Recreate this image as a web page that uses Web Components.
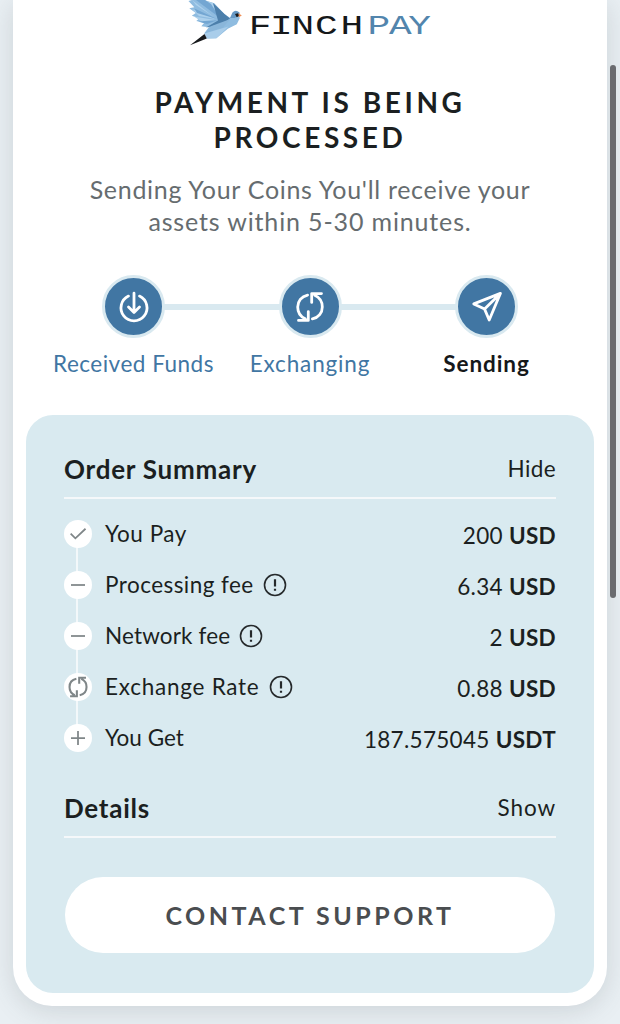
<!DOCTYPE html>
<html lang="en">
<head>
<meta charset="UTF-8">
<meta name="viewport" content="width=device-width, initial-scale=1.0">
<title>FinchPay</title>
<style>
    :root {
        --color-primary: #4176a3;
        --color-panel: #d9eaf0;
        --color-text: #1b1f21;
    }

    body {
        margin: 0;
        height: 1024px;
        overflow: hidden;
        background: #e8eef3;
        color: var(--color-text);
        font-family: Lato, "Liberation Sans", sans-serif;
    }
</style>
</head>
<body>
<payment-page>
    <finch-logo></finch-logo>
    <status-heading>
        <span slot="title">PAYMENT IS BEING<br>PROCESSED</span>
        <span slot="first">Sending Your Coins You'll receive your</span>
        <span slot="second">assets within 5-30 minutes.</span>
    </status-heading>
    <progress-steps>
        <progress-step icon="receive" style="--label-spacing: 0.5px">Received Funds</progress-step>
        <progress-step icon="exchange" style="--label-spacing: 0.85px">Exchanging</progress-step>
        <progress-step icon="send" current style="--label-spacing: 0.9px">Sending</progress-step>
    </progress-steps>
    <order-panel>
        <section-header action="Hide">Order Summary</section-header>
        <order-rows>
            <order-row icon="check" amount="200" currency="USD" style="--label-spacing: 0.5px">You Pay</order-row>
            <order-row icon="minus" amount="6.34" currency="USD" info style="--label-spacing: 0.45px">Processing fee</order-row>
            <order-row icon="minus" amount="2" currency="USD" info style="--label-spacing: 0.15px">Network fee</order-row>
            <order-row icon="exchange" amount="0.88" currency="USD" info style="--label-spacing: 0.75px">Exchange Rate</order-row>
            <order-row icon="plus" amount="187.575045" currency="USDT" style="--label-spacing: 0px">You Get</order-row>
        </order-rows>
        <section-header action="Show" style="--action-spacing: 0.9px">Details</section-header>
        <support-button>CONTACT SUPPORT</support-button>
    </order-panel>
</payment-page>

<script>
const ICONS = {
    receive: '<path d="M10.5 5.1a13 13 0 1 0 11 0M16 2.2v19M10.5 16l5.5 5.4 5.5-5.4"/>',
    exchange: '<path d="M13.6 4.1C7.4 5.4 3.7 10.3 3.7 16c0 5.3 2.6 9.6 7.6 11.8M4.5 29.4h9.8v-8.8M18.4 27.9c6.2-1.3 9.9-6.2 9.9-11.9 0-5.3-2.6-9.6-7.6-11.8M27.5 2.6h-9.8v8.8"/>',
    send: '<path d="M29.4 2.4 2.8 12.9l10.8 5.2 4.6 10.9zM13.6 18.1 29.4 2.4"/>',
    check: '<path d="M7.6 15.6 13 21 24.6 10"/>',
    minus: '<path d="M8 16h16"/>',
    plus: '<path d="M8 16h16M16 8v16"/>'
};

// White rounded card with the page scrollbar beside it
class PaymentPage extends HTMLElement {
    connectedCallback() {
        this.attachShadow({ mode: 'open' }).innerHTML = `
            <style>
                :host {
                    display: block;
                    height: 1024px;
                    padding: 0 13px 18px;
                    box-sizing: border-box;
                    background: #e9eff3;
                }

                .card {
                    height: 100%;
                    padding: 0 13px 13px;
                    box-sizing: border-box;
                    display: flex;
                    flex-direction: column;
                    background: #fff;
                    border-radius: 0 0 39px 39px;
                    box-shadow: 0 5px 26px rgba(80, 90, 95, 0.18);
                }

                .scrollbar {
                    position: absolute;
                    top: 65px;
                    right: 4px;
                    width: 6px;
                    height: 533px;
                    border-radius: 3px;
                    background: #6a6b6f;
                }
            </style>
            <div class="card"><slot></slot></div>
            <div class="scrollbar"></div>
        `;
    }
}

class FinchLogo extends HTMLElement {
    connectedCallback() {
        this.attachShadow({ mode: 'open' }).innerHTML = `
            <style>
                :host {
                    display: block;
                    height: 50px;
                    padding-left: 154px;
                }

                svg {
                    display: block;
                }

                text {
                    font: 27px "Liberation Mono", monospace;
                }
            </style>
            <svg width="260" height="50" viewBox="180 0 260 50">
                <path fill="#8fbce0" d="M188.5 1 192 0h12l10.3 3.3 10 10.7 6 4 6-7 3.5 7-3 6.2-9 4.5-11.5 9.6-9.5.2-2.5-5.2 4.5-6-7.5-1 3-3.5-8-1.8 3-2.7-7.5-2.5 4-2.8-6.5-4.7 5-1z"/>
                <path fill="#acd0ec" d="M192 0l22 17-18-12zM203 0l16 16-6-13zM192 9l24 10-17-3zM194 16.500l24 4-15 2z"/>
                <path fill="#73a6d2" d="M196 0l24 18-9-14-6-4zM194.500 8.500 217 19l-20-6zM198 21.500l20-1.500-11 4z"/>
                <path fill="#4c7fab" d="M213 3l11.500 11 5.500 4.500-8 5.500-16 3.500 12-7z"/>
                <path fill="#8ab6da" d="M204.500 33.500l7-7.500 19-7-8 9z"/>
                <path fill="#a9cdea" d="M204.500 33.500l24-7-12 11.800-9.500.2z"/>
                <path fill="#6698c4" d="M230 18l2.500-5.500q3-3.500 7 0v3l-5 2.500z"/>
                <path fill="#17191c" d="M204.500 34l-14.500 11.200 16.800-6.800zM235 14l3-.8 1.500 2.600-2.800 1.400z"/>
                <path fill="#ef8e55" d="M238.500 13.300l3.300 2.200-3 1.800z"/>
                <g transform="scale(1.4 1)">
                    <text y="34" fill="#15181a" x="177.6 192.8 208.2 225 243.2">FINCH</text>
                    <text y="34" fill="#5285ad" x="262.6 277.8 291.6">PAY</text>
                </g>
            </svg>
        `;
    }
}

class StatusHeading extends HTMLElement {
    connectedCallback() {
        this.attachShadow({ mode: 'open' }).innerHTML = `
            <style>
                :host {
                    display: block;
                    height: 225px;
                    padding-top: 35px;
                    box-sizing: border-box;
                    text-align: center;
                }

                h1 {
                    margin: 0 0 18px;
                    font-size: 28px;
                    line-height: 35px;
                    font-weight: 700;
                    letter-spacing: 3.6px;
                }

                p {
                    margin: 0;
                    font-size: 25px;
                    line-height: 32px;
                    letter-spacing: 0.7px;
                    color: #666c6f;
                }

                p + p {
                    letter-spacing: 0.85px;
                }
            </style>
            <h1><slot name="title"></slot></h1>
            <p><slot name="first"></slot></p>
            <p><slot name="second"></slot></p>
        `;
    }
}

class ProgressSteps extends HTMLElement {
    connectedCallback() {
        this.attachShadow({ mode: 'open' }).innerHTML = `
            <style>
                :host {
                    display: grid;
                    grid-template-columns: repeat(3, 176.5px);
                    justify-content: center;
                    height: 140px;
                    background: linear-gradient(#d9e9f0, #d9e9f0) center 29px / 353px 6px no-repeat;
                }
            </style>
            <slot></slot>
        `;
    }
}

class ProgressStep extends HTMLElement {
    connectedCallback() {
        this.attachShadow({ mode: 'open' }).innerHTML = `
            <style>
                :host {
                    display: flex;
                    flex-direction: column;
                    align-items: center;
                    color: var(--color-primary);
                    font-size: 22.5px;
                    line-height: 30px;
                    letter-spacing: var(--label-spacing);
                    white-space: nowrap;
                }

                :host([current]) {
                    color: #15181a;
                    font-weight: 700;
                }

                .circle {
                    display: grid;
                    place-items: center;
                    width: 57px;
                    height: 57px;
                    margin-bottom: 11px;
                    border: 3px solid #d9e9f0;
                    border-radius: 50%;
                    background: var(--color-primary);
                }

                svg {
                    fill: none;
                    stroke: #fff;
                    stroke-width: 2.8;
                    stroke-linecap: round;
                    stroke-linejoin: round;
                }
            </style>
            <div class="circle">
                <svg width="32" height="32" viewBox="0 0 32 32">${ICONS[this.getAttribute('icon')]}</svg>
            </div>
            <div><slot></slot></div>
        `;
    }
}

class OrderPanel extends HTMLElement {
    connectedCallback() {
        this.attachShadow({ mode: 'open' }).innerHTML = `
            <style>
                :host {
                    display: flex;
                    flex-direction: column;
                    flex: 1;
                    padding: 34px 38px 40px;
                    box-sizing: border-box;
                    border-radius: 27px;
                    background: var(--color-panel);
                }
            </style>
            <slot></slot>
        `;
    }
}

class SectionHeader extends HTMLElement {
    connectedCallback() {
        this.attachShadow({ mode: 'open' }).innerHTML = `
            <style>
                :host {
                    display: flex;
                    justify-content: space-between;
                    align-items: center;
                    height: 50px;
                    padding-bottom: 9px;
                    box-sizing: border-box;
                    border-bottom: 2px solid #f5f8fa;
                    line-height: 40px;
                }

                h2 {
                    margin: 0;
                    font-size: 26px;
                    font-weight: 700;
                    letter-spacing: 0.75px;
                }

                .action {
                    font-size: 22.5px;
                    letter-spacing: var(--action-spacing, 0.4px);
                }
            </style>
            <h2><slot></slot></h2>
            <span class="action">${this.getAttribute('action')}</span>
        `;
    }
}

class OrderRows extends HTMLElement {
    connectedCallback() {
        this.attachShadow({ mode: 'open' }).innerHTML = `
            <style>
                :host {
                    display: block;
                    height: 289px;
                    padding-top: 10px;
                    box-sizing: border-box;
                    background: linear-gradient(#f3f8fa, #f3f8fa) 12px 36px / 2px 204px no-repeat;
                }
            </style>
            <slot></slot>
        `;
    }
}

class OrderRow extends HTMLElement {
    connectedCallback() {
        const info = this.hasAttribute('info') ? `
            <svg class="info" width="24" height="24" viewBox="0 0 24 24">
                <circle cx="12" cy="12" r="10.5"/>
                <path d="M12 6.2v7.4M12 15.8v2"/>
            </svg>` : '';
        this.attachShadow({ mode: 'open' }).innerHTML = `
            <style>
                :host {
                    display: flex;
                    align-items: center;
                    height: 51px;
                    font-size: 22.5px;
                    line-height: 30px;
                    letter-spacing: 0.3px;
                }

                .marker {
                    display: grid;
                    place-items: center;
                    width: 28px;
                    height: 28px;
                    margin: 0 13px 1px 0;
                    border-radius: 50%;
                    background: #fff;
                }

                .marker svg {
                    fill: none;
                    stroke: #7f8688;
                    stroke-width: 2;
                }

                .label {
                    padding-bottom: 2px;
                    letter-spacing: var(--label-spacing);
                }

                .info {
                    margin: 0 0 2px 9px;
                    fill: none;
                    stroke: #25292b;
                    stroke-width: 1.6;
                }

                .info path {
                    stroke-width: 2.2;
                }

                .value {
                    margin-left: auto;
                    padding-top: 2px;
                }
            </style>
            <div class="marker">
                <svg width="28" height="28" viewBox="0 0 32 32">${this.marker()}</svg>
            </div>
            <span class="label"><slot></slot></span>
            ${info}
            <span class="value">${this.getAttribute('amount')} <b>${this.getAttribute('currency')}</b></span>
        `;
    }

    // The exchange icon is drawn smaller inside the row marker
    marker() {
        const icon = this.getAttribute('icon');
        return icon === 'exchange'
            ? `<g transform="translate(3.400 3.400) scale(0.79)" stroke-width="3">${ICONS.exchange}</g>`
            : ICONS[icon];
    }
}

class SupportButton extends HTMLElement {
    connectedCallback() {
        this.attachShadow({ mode: 'open' }).innerHTML = `
            <style>
                :host {
                    display: block;
                    margin: 39px 1px 0;
                }

                button {
                    display: block;
                    width: 100%;
                    height: 76px;
                    padding: 0;
                    border: 0;
                    border-radius: 38px;
                    background: #fff;
                    color: #4a4d50;
                    font: 700 25px/40px Lato, "Liberation Sans", sans-serif;
                    letter-spacing: 3.5px;
                }
            </style>
            <button><slot></slot></button>
        `;
    }
}

customElements.define('payment-page', PaymentPage);
customElements.define('finch-logo', FinchLogo);
customElements.define('status-heading', StatusHeading);
customElements.define('progress-steps', ProgressSteps);
customElements.define('progress-step', ProgressStep);
customElements.define('order-panel', OrderPanel);
customElements.define('section-header', SectionHeader);
customElements.define('order-rows', OrderRows);
customElements.define('order-row', OrderRow);
customElements.define('support-button', SupportButton);
</script>
</body>
</html>
